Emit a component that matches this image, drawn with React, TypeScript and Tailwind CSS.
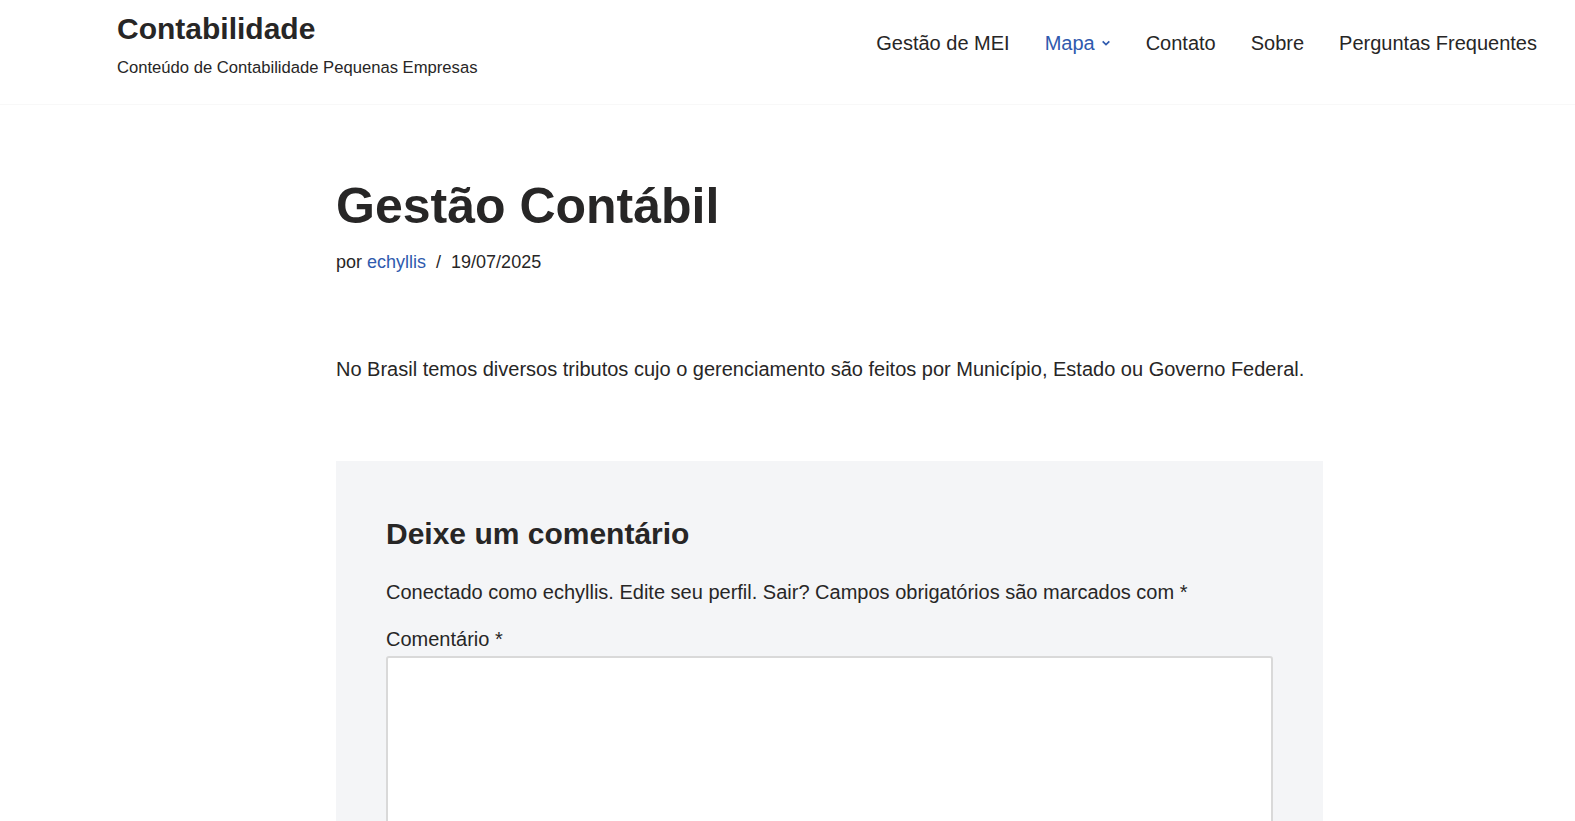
import React from 'react';

const navItems = ['Gestão de MEI', 'Mapa', 'Contato', 'Sobre', 'Perguntas Frequentes'];

const App: React.FC = () => {
  return (
    <div className="h-screen overflow-hidden bg-white text-[#272626] font-['Liberation_Sans',Arial,sans-serif]">
      <header className="flex h-[105px] items-start justify-between border-b border-[#f8f8f8] pl-[117px] pr-[38px]">
        <div className="pt-[11px]">
          <div className="text-[30px] font-bold leading-[36px]">Contabilidade</div>
          <div className="mt-[11px] text-[16.64px] leading-[20px]">Conteúdo de Contabilidade Pequenas Empresas</div>
        </div>
        <nav className="flex items-center gap-[35px] pt-[31px] text-[20px] leading-[24px]">
          {navItems.map((item) =>
            item === 'Mapa' ? (
              <a key={item} href="#" className="flex items-center gap-[6px] text-[#2f5aae]">
                {item}
                <svg className="h-[10px] w-[10px]" viewBox="0 0 24 24" fill="none" stroke="currentColor" strokeWidth={4}>
                  <path d="M4 8l8 8 8-8" />
                </svg>
              </a>
            ) : (
              <a key={item} href="#">
                {item}
              </a>
            )
          )}
        </nav>
      </header>

      <main className="ml-[336px] w-[987px]">
        <h1 className="mt-[69px] text-[50px] font-bold leading-[64px]">Gestão Contábil</h1>
        <div className="mt-[12px] text-[18px] leading-[24px]">
          por <a href="#" className="text-[#2f5aae]">echyllis</a>
          <span className="mx-[10px]">/</span>
          19/07/2025
        </div>
        <p className="mt-[81px] text-[20px] leading-[28px]">
          No Brasil temos diversos tributos cujo o gerenciamento são feitos por Município, Estado ou Governo Federal.
        </p>

        <section className="mt-[78px] bg-[#f4f5f7] px-[50px] pt-[53px] pb-[40px]">
          <h2 className="text-[30px] font-bold leading-[40px]">Deixe um comentário</h2>
          <p className="mt-[24px] text-[20px] leading-[28px]">
            Conectado como echyllis. Edite seu perfil. Sair? Campos obrigatórios são marcados com *
          </p>
          <label className="mt-[19px] block text-[20px] leading-[28px]">Comentário *</label>
          <textarea className="mt-[3px] block h-[300px] w-full rounded-[3px] border-2 border-[#d9d9d9] bg-white" />
        </section>
      </main>
    </div>
  );
};

export default App;
